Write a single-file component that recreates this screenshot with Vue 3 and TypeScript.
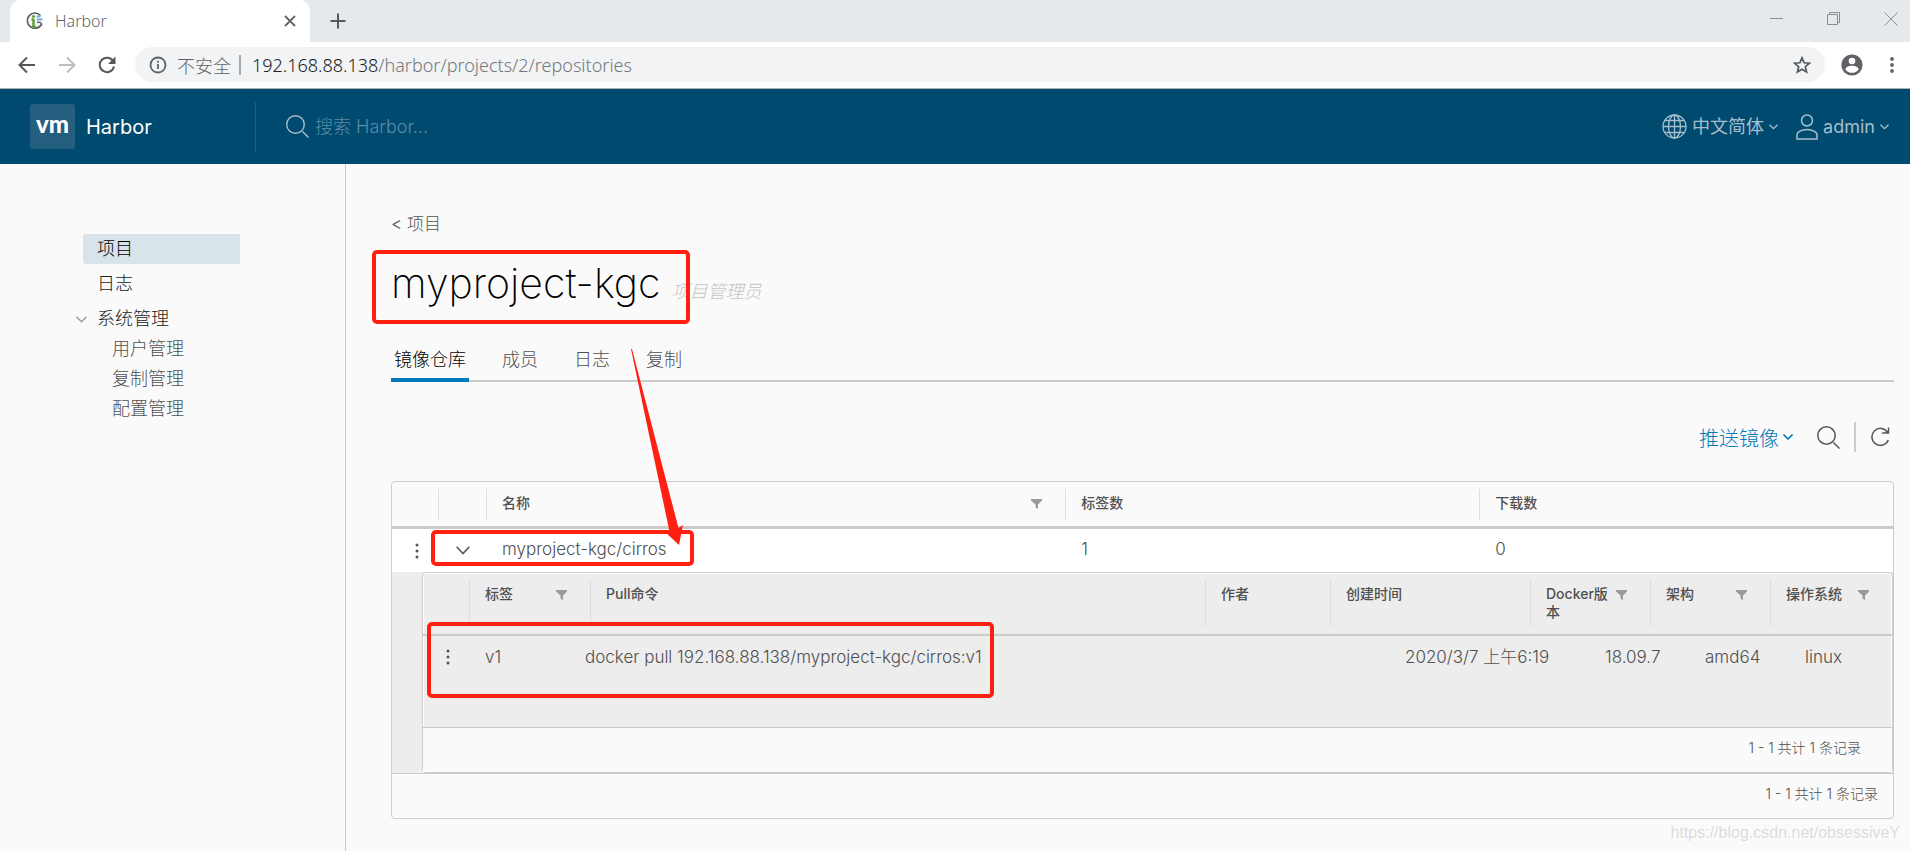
<script setup lang="ts">
interface Column { label: string; filter?: boolean }

const outerColumns: Column[] = [
  { label: '名称', filter: true },
  { label: '标签数' },
  { label: '下载数' },
]
const innerColumns: Column[] = [
  { label: '标签', filter: true },
  { label: 'Pull命令' },
  { label: '作者' },
  { label: '创建时间' },
  { label: 'Docker版本', filter: true },
  { label: '架构', filter: true },
  { label: '操作系统', filter: true },
]
const tag = ['v1', 'docker pull 192.168.88.138/myproject-kgc/cirros:v1', '', '2020/3/7 上午6:19', '18.09.7', 'amd64', 'linux']
const adminLinks = ['用户管理', '复制管理', '配置管理']
const tabs = ['镜像仓库', '成员', '日志', '复制']
</script>

<template>
  <div class="page">
    <div class="tabstrip">
      <div class="browser-tab">
        <svg class="favicon" width="18" height="18" viewBox="0 0 18 18">
          <path d="M14.500 3.500A7.600 7.600 0 1 0 15.500 12.500" fill="#f4f7f4" stroke="#555b5e" stroke-width="1.600" />
          <path d="M7.500 7v8M5.500 15h4.500M5.500 7.500h2" stroke="#5d9b3c" stroke-width="2.400" fill="none" />
          <circle cx="7.500" cy="4.500" r="1.500" fill="#5d9b3c" />
          <path d="M10.500 4.500h4M11 7.500h5.500" stroke="#7ea9dc" stroke-width="1.800" />
          <path d="M11 10.500c3-1 5 .5 4.500 3" stroke="#555b5e" stroke-width="1.400" fill="none" />
        </svg>
        <span class="tab-title">Harbor</span>
        <button class="plain" aria-label="Close tab">
          <svg width="12" height="12" viewBox="0 0 12 12"><path d="M1 1l10 10M11 1L1 11" stroke="#5f6368" stroke-width="1.800" /></svg>
        </button>
      </div>
      <button class="plain new-tab" aria-label="New tab">
        <svg width="16" height="16" viewBox="0 0 16 16"><path d="M8 0.500v15M0.500 8h15" stroke="#55595d" stroke-width="2" /></svg>
      </button>
      <div class="window-controls">
        <button class="plain" aria-label="Minimize"><svg width="14" height="14" viewBox="0 0 14 14"><path d="M0 6.500h13" stroke="#8b8d8f" /></svg></button>
        <button class="plain" aria-label="Restore"><svg width="14" height="14" viewBox="0 0 14 14" fill="none" stroke="#8b8d8f"><path d="M.5 2.500h10v10H.5zM2.500 2.500v-2h10v10h-2" /></svg></button>
        <button class="plain" aria-label="Close"><svg width="14" height="14" viewBox="0 0 14 14"><path d="M.5.5l13 13M13.500.5l-13 13" stroke="#8b8d8f" /></svg></button>
      </div>
    </div>

    <div class="toolbar">
      <button class="plain" aria-label="Back"><svg width="18" height="18" viewBox="0 0 18 18" fill="none" stroke="#55595e" stroke-width="2"><path d="M17 9H2M9 1.500L1.500 9 9 16.500" /></svg></button>
      <button class="plain" aria-label="Forward"><svg width="18" height="18" viewBox="0 0 18 18" fill="none" stroke="#bcbec1" stroke-width="2"><path d="M1 9h15M9 1.500L16.500 9 9 16.500" /></svg></button>
      <button class="plain" aria-label="Reload"><svg width="18" height="18" viewBox="0 0 18 18"><path d="M15.300 5.500A7.200 7.200 0 1 0 16 10.500" fill="none" stroke="#55595e" stroke-width="2" /><path d="M17.500 0.500v7.500H10z" fill="#55595e" /></svg></button>
      <div class="omnibox">
        <svg width="18" height="18" viewBox="0 0 18 18" fill="none" stroke="#5f6368" stroke-width="1.800"><circle cx="9" cy="9" r="7.500" /><path d="M9 8v5M9 4.800v1.900" /></svg>
        <span class="insecure">不安全</span>
        <span class="omni-sep"></span>
        <span class="url"><b>192.168.88.138</b>/harbor/projects/2/repositories</span>
        <button class="plain star" aria-label="Bookmark"><svg width="18" height="18" viewBox="0 0 18 18" fill="none" stroke="#55595e" stroke-width="1.700"><path d="M9 1.800l2.100 5 5.300.4-4.100 3.500 1.300 5.300L9 13.200 4.400 16l1.300-5.300L1.600 7.200l5.300-.4z" /></svg></button>
      </div>
      <button class="plain" aria-label="Profile">
        <svg width="22" height="22" viewBox="0 0 22 22"><circle cx="11" cy="11" r="10.600" fill="#5f6368" /><circle cx="11" cy="7" r="3.300" fill="#fff" /><path d="M4.500 15.500c0-5 13-5 13 0a8 8 0 0 1-13 0z" fill="#fff" /></svg>
      </button>
      <button class="plain menu" aria-label="Menu">
        <svg width="4" height="18" viewBox="0 0 4 18" fill="#5f6368"><circle cx="2" cy="3" r="1.900" /><circle cx="2" cy="9" r="1.900" /><circle cx="2" cy="15" r="1.900" /></svg>
      </button>
    </div>

    <header class="app-header">
      <a class="brand" href="#">
        <span class="logo">vm</span>
        <span>Harbor</span>
      </a>
      <label class="search">
        <svg width="23" height="23" viewBox="0 0 23 23" fill="none" stroke="#a6bfcc" stroke-width="1.400"><circle cx="9.500" cy="9.500" r="8.800" /><path d="M16.500 16.500l6 6" /></svg>
        <input type="text" placeholder="搜索 Harbor..." aria-label="搜索 Harbor" />
      </label>
      <button class="plain head-action">
        <svg width="25" height="25" viewBox="0 0 25 25" fill="none" stroke="#a6bfcc" stroke-width="1.300"><circle cx="12.500" cy="12.500" r="11.500" /><ellipse cx="12.500" cy="12.500" rx="6" ry="11.500" /><path d="M12.500 1v23M1 12.500h23M3 6.500h19M3 18.500h19" /></svg>
        <span>中文简体</span>
        <svg width="9" height="6" viewBox="0 0 9 6" fill="none" stroke="#a6bfcc" stroke-width="1.300"><path d="M.5.7l4 4 4-4" /></svg>
      </button>
      <button class="plain head-action user">
        <svg width="22" height="26" viewBox="0 0 22 26" fill="none" stroke="#a6bfcc" stroke-width="1.500"><circle cx="11" cy="6.500" r="5.500" /><path d="M1 25v-4c0-3 4.500-5.500 10-5.500s10 2.500 10 5.500v4z" /></svg>
        <span>admin</span>
        <svg width="9" height="6" viewBox="0 0 9 6" fill="none" stroke="#a6bfcc" stroke-width="1.300"><path d="M.5.7l4 4 4-4" /></svg>
      </button>
    </header>

    <div class="body">
      <nav class="sidebar">
        <a class="nav-item active" href="#">项目</a>
        <a class="nav-item" href="#">日志</a>
        <button class="plain nav-item group">
          <svg width="11" height="7" viewBox="0 0 11 7" fill="none" stroke="#9a9a9a" stroke-width="1.500"><path d="M.5.8l5 5 5-5" /></svg>
          <span>系统管理</span>
        </button>
        <a v-for="link in adminLinks" :key="link" class="sub-item" href="#">{{ link }}</a>
      </nav>

      <main class="main">
        <a class="back" href="#">&lt; 项目</a>
        <div class="title-row">
          <h1>myproject-kgc</h1>
          <em>项目管理员</em>
        </div>
        <div class="tabs" role="tablist">
          <button v-for="(t, i) in tabs" :key="t" class="plain tab" :class="{ current: i === 0 }" role="tab" :aria-selected="i === 0">{{ t }}</button>
        </div>

        <div class="actions">
          <button class="plain push">
            <span>推送镜像</span>
            <svg width="10" height="6" viewBox="0 0 10 6" fill="none" stroke="#0079b8" stroke-width="1.500"><path d="M.5.6L5 5 9.500.6" /></svg>
          </button>
          <button class="plain" aria-label="搜索"><svg width="23" height="23" viewBox="0 0 23 23" fill="none" stroke="#565656" stroke-width="1.500"><circle cx="9.500" cy="9.500" r="8.700" /><path d="M16.500 16.500l6 6" /></svg></button>
          <span class="action-sep"></span>
          <button class="plain" aria-label="刷新"><svg width="20" height="20" viewBox="0 0 20 20" fill="none" stroke="#565656" stroke-width="1.500"><path d="M17.700 5.500A8.500 8.500 0 1 0 18.300 13M18.500.5V6H12" /></svg></button>
        </div>

        <table class="grid outer">
          <thead>
            <tr>
              <th></th>
              <th></th>
              <th v-for="c in outerColumns" :key="c.label">
                <span>{{ c.label }}</span>
                <button v-if="c.filter" class="plain" :aria-label="c.label + ' 过滤'"><svg width="11" height="10" viewBox="0 0 11 10"><path d="M0 0h11v1.500L7 5.500V10L4.500 8.500v-3L0 1.500z" fill="#9a9a9a" /></svg></button>
              </th>
            </tr>
          </thead>
          <tbody>
            <tr class="repo">
              <td class="icon"><button class="plain" aria-label="操作"><svg width="4" height="16" viewBox="0 0 4 16" fill="#565656"><circle cx="2" cy="2" r="1.500" /><circle cx="2" cy="8" r="1.500" /><circle cx="2" cy="14" r="1.500" /></svg></button></td>
              <td class="icon"><button class="plain" aria-label="收起"><svg width="14" height="9" viewBox="0 0 14 9" fill="none" stroke="#565656" stroke-width="1.600"><path d="M.7.8L7 7.500 13.300.8" /></svg></button></td>
              <td>myproject-kgc/cirros</td>
              <td>1</td>
              <td>0</td>
            </tr>
            <tr class="detail">
              <td>
                <table class="grid inner">
                  <thead>
                    <tr>
                      <th></th>
                      <th v-for="c in innerColumns" :key="c.label">
                        <span>{{ c.label }}</span>
                        <button v-if="c.filter" class="plain" :aria-label="c.label + ' 过滤'"><svg width="11" height="10" viewBox="0 0 11 10"><path d="M0 0h11v1.500L7 5.500V10L4.500 8.500v-3L0 1.500z" fill="#9a9a9a" /></svg></button>
                      </th>
                    </tr>
                  </thead>
                  <tbody>
                    <tr>
                      <td class="icon"><button class="plain" aria-label="操作"><svg width="4" height="16" viewBox="0 0 4 16" fill="#565656"><circle cx="2" cy="2" r="1.500" /><circle cx="2" cy="8" r="1.500" /><circle cx="2" cy="14" r="1.500" /></svg></button></td>
                      <td v-for="(v, i) in tag" :key="i">{{ v }}</td>
                    </tr>
                  </tbody>
                  <tfoot>
                    <tr><td>1 - 1 共计 1 条记录</td></tr>
                  </tfoot>
                </table>
              </td>
            </tr>
          </tbody>
          <tfoot>
            <tr><td>1 - 1 共计 1 条记录</td></tr>
          </tfoot>
        </table>
      </main>
    </div>

    <svg class="marks" width="1000" height="710" viewBox="0 0 1000 710" fill="none" stroke="#ff2012" stroke-width="4">
      <rect x="374" y="252" width="314" height="70" rx="3" />
      <rect x="433" y="532" width="259" height="32" rx="3" />
      <rect x="429" y="624" width="563" height="72" rx="3" />
      <path d="M631 349l1 0 46.500 179 4.500-3-4 20-15-14 5.500 0.500z" fill="#ff2012" stroke="none" />
    </svg>
    <div class="watermark">https://blog.csdn.net/obsessiveY</div>
  </div>
</template>

<style>
body { margin: 0; background: #fafafa; }
</style>

<style scoped>
.page {
  position: relative;
  display: flex;
  flex-direction: column;
  min-height: 100vh;
  overflow: hidden;
  background: #fafafa;
  color: #505050;
  font-family: Inter, "Noto Sans CJK SC", sans-serif;
  font-weight: 300;
  font-size: 17px;
}
.page *, .page { box-sizing: border-box; }
.plain { display: inline-flex; align-items: center; margin: 0; padding: 0; border: 0; background: none; color: inherit; font: inherit; }
a { color: inherit; text-decoration: none; }
svg { display: block; flex: none; }

.tabstrip { display: flex; align-items: center; height: 42px; padding-left: 10px; background: #e5e9ec; }
.browser-tab { display: flex; align-items: center; width: 300px; height: 42px; padding: 0 14px 0 16px; border-radius: 10px 10px 0 0; background: #fff; }
.tab-title { flex: 1; margin-left: 11px; color: #5f6368; font: 300 16px "Noto Sans", sans-serif; }
.new-tab { margin-left: 20px; }
.window-controls { display: flex; gap: 43px; margin-left: auto; padding: 0 12px 4px 0; }

.toolbar { display: flex; align-items: center; height: 47px; padding: 0 16px 1px 18px; gap: 22px; border-bottom: 1px solid #b1b1b1; background: #fff; }
.omnibox { display: flex; flex: 1; align-items: center; height: 35px; margin-left: -3px; padding: 0 14px; border-radius: 18px; background: #f1f3f4; color: #75797e; font: 300 18px "Noto Sans", "Noto Sans CJK SC", sans-serif; }
.insecure { margin-left: 10px; color: #5f6368; }
.omni-sep { width: 2px; height: 20px; margin: 0 11px 0 8px; background: #a6a9ac; }
.url b { color: #202124; font-weight: inherit; }
.star { margin-left: auto; }
.omnibox + .plain { margin-left: -6px; }
.menu { margin-left: 5px; }

.app-header { display: flex; align-items: center; height: 75px; padding-right: 21px; background: #004a70; color: #a6bfcc; }
.brand { display: flex; align-items: center; gap: 11px; width: 256px; height: 50px; padding-left: 30px; border-right: 1px solid #1d5f81; color: #fff; font-size: 20px; font-weight: 400; }
.logo { width: 45px; height: 45px; border-radius: 3px; background: #245f80; font: 900 24px/40px Lato, sans-serif; text-align: center; }
.search { display: flex; flex: 1; align-items: center; gap: 6px; padding-left: 30px; }
.search input { width: 300px; padding: 0; border: 0; outline: 0; background: none; color: #fff; font: 300 18px/24px Inter, "Noto Sans CJK SC", sans-serif; }
.search input::placeholder { color: #5a8ca8; opacity: 1; }
.head-action { gap: 5px; font-size: 18px; font-weight: 400; line-height: 26px; }
.user { margin-left: 18px; }

.body { display: flex; flex: 1; }
.sidebar { display: flex; flex-direction: column; width: 346px; padding: 70px 105px 0 83px; border-right: 1px solid #ccc; font-size: 18px; line-height: 30px; }
.nav-item { height: 30px; margin-bottom: 5px; padding-left: 14px; color: #222; }
.nav-item.active { border-radius: 3px 0 0 3px; background: #d9e4ea; color: #000; }
.group { gap: 10px; margin: 0 0 0 -7px; padding: 0; }
.sub-item { padding-left: 29px; }

.main { flex: 1; min-width: 0; padding: 48px 16px 28px 45px; }
.back { display: block; font-size: 17px; line-height: 24px; }
.title-row { display: flex; align-items: baseline; gap: 11px; margin-top: 23px; height: 52px; }
h1 { margin: 0; color: #000; font-size: 41px; font-weight: 200; line-height: 48px; }
em { color: #c4c4c4; font-size: 18px; }
.tabs { display: flex; gap: 30px; height: 45px; margin-top: 26px; box-shadow: inset 0 -2px #ccc; }
.tab { padding: 0 3px; border-bottom: 4px solid transparent; font-size: 18px; }
.tab.current { border-color: #0079b8; color: #000; }

.actions { display: flex; align-items: center; justify-content: flex-end; gap: 14px; height: 30px; margin-top: 40px; padding-right: 4px; }
.push { gap: 4px; margin-right: 10px; color: #0079b8; font-size: 20px; }
.action-sep { width: 2px; height: 30px; background: #ccc; }

.grid { display: block; border: 1px solid #ccc; border-radius: 4px; border-spacing: 0; }
.grid thead, .grid tbody, .grid tfoot { display: block; }
.grid tr { display: grid; }
.grid th, .grid td { padding: 0; text-align: left; font-weight: inherit; }
.grid th { display: flex; justify-content: space-between; align-items: flex-start; border-left: 1px solid #ddd; padding: 0 23px 0 15px; font-size: 14px; font-weight: 500; line-height: 18px; }
.grid th:first-child { border-left: 0; }
.grid th .plain { height: 20px; }
.grid .icon { padding: 0; }
.grid tfoot td { padding-bottom: 4px; text-align: right; font-size: 14px; line-height: 40px; }

.outer { margin-top: 29px; }
.outer > thead > tr, .repo { grid-template-columns: 46px 48px 14fr 10fr 10fr; }
.outer > thead > tr { height: 47px; border-bottom: 3px solid #ccc; }
.outer > thead th { margin: 7px 0 6px; padding-top: 5px; }
.outer > tbody > .repo { height: 43px; background: #fff; line-height: 40px; }
.repo td { padding-left: 16px; }
.repo .icon { display: flex; align-items: center; padding-left: 18px; }
.repo .icon:first-child { padding-left: 23px; }
.detail > td { padding-left: 30px; background: #ededed; }
.outer > tfoot td { padding-right: 15px; border-top: 1px solid #ccc; }

.inner { box-shadow: inset 0 0 0 1px #fff; }
.inner thead tr { grid-template-columns: 46px 121px 1fr 125px 200px 120px 120px 122px; height: 63px; border-bottom: 2px solid #ccc; }
.inner th { margin: 7px 0 7px; padding-top: 5px; }
.inner tbody tr { grid-template-columns: 46px 100px 1fr 200px 200px 100px 100px 103px; height: 91px; line-height: 42px; }
.inner tbody td { padding-left: 16px; white-space: nowrap; }
.inner tbody .icon { display: flex; align-items: center; height: 42px; padding-left: 23px; }
.inner tfoot td { padding-right: 31px; border-top: 1px solid #ccc; background: #fafafa; }

.marks { position: absolute; top: 0; left: 0; pointer-events: none; }
.watermark { position: absolute; right: 10px; bottom: 6px; color: #dcdcdc; font: 400 16px/24px "Liberation Sans", sans-serif; text-shadow: 1px 1px #fff; }
</style>
